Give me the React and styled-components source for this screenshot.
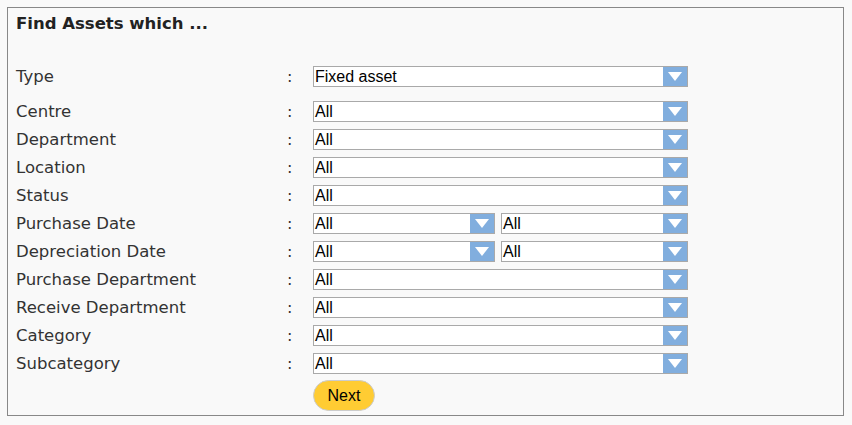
import React from 'react'
import styled, { createGlobalStyle } from 'styled-components'

const Global = createGlobalStyle`
body {
  margin: 0;
  background: #f9f9f9;
  font-family: "DejaVu Sans", Verdana, sans-serif;
}
`;

const Page = styled.div`
  width: 852px;
  height: 425px;
  padding: 7px;
  box-sizing: border-box;
`;

const Panel = styled.div`
  width: 837px;
  height: 409px;
  box-sizing: border-box;
  border: 1px solid #888;
  background: #f9f9f9;
  padding: 6px 8px 0 8px;
`;

const Heading = styled.h2`
  margin: 0;
  font-size: 16.5px;
  font-weight: bold;
  color: #222;
  line-height: 20px;
`;

const Form = styled.div`
  display: flex;
  flex-direction: column;
  margin-top: 28px;
`;

const Row = styled.div`
  display: grid;
  grid-template-columns: 271px 26px 375px;
  height: 28px;
  align-items: center;
  margin-bottom: ${p => (p.spaced ? '7px' : '0')};
`;

const Label = styled.div`
  font-size: 16.5px;
  color: #333;
`;

const Colon = styled.div`
  font-size: 16px;
  color: #333;
`;

const Pair = styled.div`
  display: flex;
  gap: 6px;
`;

const Box = styled.div`
  display: flex;
  align-items: center;
  height: 21px;
  width: ${p => p.w}px;
  box-sizing: border-box;
  border: 1px solid #a9a9a9;
  background: #fff;
  font-family: "Liberation Sans", Arial, sans-serif;
  font-size: 16px;
  color: #000;
`;

const BoxText = styled.span`
  flex: 1;
  padding-left: 1px;
  line-height: 19px;
`;

const Arrow = styled.span`
  width: 24px;
  height: 19px;
  background: #81aede;
  display: flex;
  align-items: center;
  justify-content: center;
`;

const NextButton = styled.button`
  margin: 3px 0 0 297px;
  width: 62px;
  height: 31px;
  border-radius: 16px;
  border: 1px solid #ccc;
  background: #ffcc33;
  font-family: "Liberation Sans", Arial, sans-serif;
  font-size: 16px;
  color: #000;
  padding: 0;
  cursor: pointer;
`;

const Select = ({ value, w = 375 }) => (
  <Box w={w}>
    <BoxText>{value}</BoxText>
    <Arrow>
      <svg width="14" height="9" viewBox="0 0 14 9">
        <path d="M0 0 H14 L7 9 Z" fill="#fff" />
      </svg>
    </Arrow>
  </Box>
)

const rows = [
  { label: 'Centre' },
  { label: 'Department' },
  { label: 'Location' },
  { label: 'Status' },
  { label: 'Purchase Date', pair: true },
  { label: 'Depreciation Date', pair: true },
  { label: 'Purchase Department' },
  { label: 'Receive Department' },
  { label: 'Category' },
  { label: 'Subcategory' },
]

const App = () => {
  return (
    <Page>
      <Global />
      <Panel>
        <Heading>Find Assets which ...</Heading>
        <Form>
          <Row spaced>
            <Label>Type</Label>
            <Colon>:</Colon>
            <Select value="Fixed asset" />
          </Row>
          {rows.map(r => (
            <Row key={r.label}>
              <Label>{r.label}</Label>
              <Colon>:</Colon>
              {r.pair ? (
                <Pair>
                  <Select value="All" w={182} />
                  <Select value="All" w={187} />
                </Pair>
              ) : (
                <Select value="All" />
              )}
            </Row>
          ))}
          <NextButton>Next</NextButton>
        </Form>
      </Panel>
    </Page>
  )
}

export default App
